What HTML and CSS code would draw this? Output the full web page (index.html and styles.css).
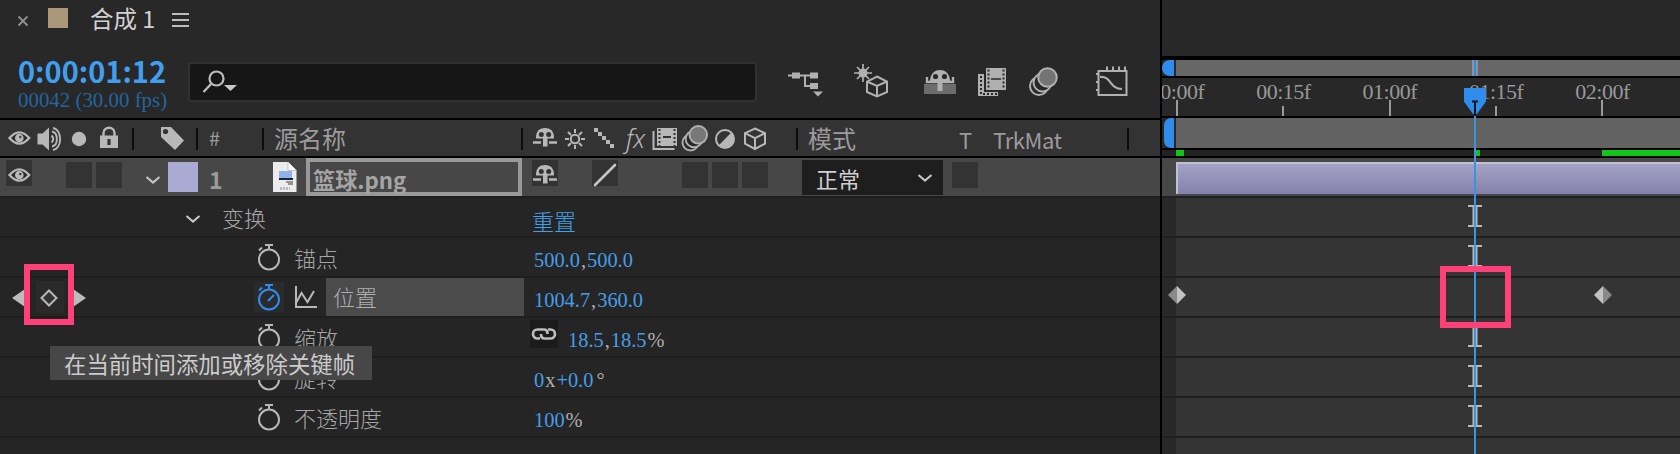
FILE: index.html
```html
<!DOCTYPE html>
<html lang="zh-CN">
<head>
<meta charset="utf-8">
<title>合成 1</title>
<link rel="stylesheet" href="styles.css">
</head>
<body>
<svg class="defs" width="0" height="0">
  <symbol id="eye" viewBox="0 0 30 30"><path d="M5.500 15Q15.300 3.800 25.200 15Q15.300 26.200 5.500 15Z" fill="#2b2b2b" stroke="#b8b8b8" stroke-width="2.400"/><circle cx="15.300" cy="15" r="4.300" fill="#b8b8b8"/><circle cx="16.300" cy="14" r="1.300" fill="#444"/></symbol>
  <symbol id="shy" viewBox="0 0 30 30"><path d="M6 14.500C6 8 10 5 15 5s9 3 9 9.500v1H6z" fill="#b8b8b8"/><circle cx="11.300" cy="11.500" r="2.500" fill="#333"/><circle cx="18.700" cy="11.500" r="2.500" fill="#333"/><path d="M3 19.500h8M19 19.500h8" stroke="#b8b8b8" stroke-width="2.400"/><path d="M13 14h4.500v9.500H13z" fill="#b8b8b8"/></symbol>
  <symbol id="watch" viewBox="0 0 30 30"><g fill="none" stroke="currentColor" stroke-width="2"><circle cx="15" cy="17.500" r="10"/><path d="M15 3.500v4M11 3h8M5 8.500l3-3"/></g></symbol>
  <symbol id="chev" viewBox="0 0 16 10"><path d="M1.500 2l6.500 5.500L14.500 2" fill="none" stroke="#c4c4c4" stroke-width="2.200"/></symbol>
  <symbol id="cube" viewBox="0 0 30 30"><path d="M15 5.500l10 4.700v10.500L15 26 5 20.700V10.200zM5 10.200l10 5 10-5M15 15.200V26" fill="none" stroke="#b8b8b8" stroke-width="2"/></symbol>
  <symbol id="blur" viewBox="0 0 30 30"><g fill="#282828" stroke="#b0b0b0" stroke-width="1.900"><circle cx="10.500" cy="19.500" r="8"/><circle cx="14" cy="16" r="8.300"/><circle cx="18.300" cy="11.800" r="8.800" fill="#777"/></g></symbol>
</svg>

<main class="app">
  <section class="panel">
    <div class="tab">
      <svg class="close" width="12" height="12" viewBox="0 0 12 12"><path d="M1.500 1.500l9 9M10.500 1.500l-9 9" stroke="#909090" stroke-width="1.800"/></svg>
      <span class="comp-swatch"></span>
      <span class="comp-name">合成 1</span>
      <svg class="menu" width="17" height="16" viewBox="0 0 17 16"><path d="M0 2h17M0 8h17M0 14h17" stroke="#bdbdbd" stroke-width="2"/></svg>
    </div>
    <div class="tools">
      <div class="time"><span class="timecode">0:00:01:12</span><span class="frames">00042 (30.00 fps)</span></div>
      <div class="search"><svg width="36" height="26" viewBox="0 0 36 26"><circle cx="14.500" cy="9.500" r="7" fill="none" stroke="#bcbcbc" stroke-width="2.200"/><path d="M9.500 14.500L1.500 23" stroke="#bcbcbc" stroke-width="2.400"/><path d="M22 16h13l-6.500 6z" fill="#c8c8c8"/></svg></div>
      <div class="buttons">
        <svg width="36" height="36" viewBox="0 0 36 36"><path d="M0 12.500h24M17 12.500v10.500h7" fill="none" stroke="#b0b0b0" stroke-width="2"/><path d="M4 9.500h8v6H4zM22 9.500h8v6h-8zM22 20h8v6h-8zM25 28.500h10l-5 5z" fill="#b0b0b0"/></svg>
        <svg width="36" height="36" viewBox="0 0 36 36"><path d="M9 1v18M0 10h18M3 4l12 12M15 4L3 16" stroke="#b0b0b0" stroke-width="1.700"/><circle cx="9" cy="10" r="4.500" fill="#b0b0b0"/><path d="M23 13.500l10 5v10.500l-10 4.500-10-4.500V18.500zM13 18.500l10 4.500 10-4.500M23 23v10" fill="none" stroke="#b0b0b0" stroke-width="2"/></svg>
        <svg width="34" height="36" viewBox="0 0 34 36"><path d="M1 21h32v10H1z" fill="#6b6b6b"/><path d="M7 17C8 10 12 7 17 7s9 3 10 10v2H7z" fill="#b0b0b0"/><path d="M4 14v5h26v-5" fill="none" stroke="#b0b0b0" stroke-width="2.400"/><path d="M14.500 16h5v12h-5z" fill="#b0b0b0"/><circle cx="12.500" cy="13.500" r="2.600" fill="#282828"/><circle cx="21.500" cy="13.500" r="2.600" fill="#282828"/></svg>
        <svg width="32" height="36" viewBox="0 0 32 36"><path d="M10 5h20v22H10z" fill="#b0b0b0"/><path d="M12.500 6.500v20M27.500 6.500v20" stroke="#282828" stroke-width="2" stroke-dasharray="2 2"/><path d="M15 16h10" stroke="#282828" stroke-width="1.500"/><path d="M2 11h6v18h14v4H2z" fill="#b0b0b0"/><path d="M5 13v18h17" fill="none" stroke="#282828" stroke-width="2" stroke-dasharray="2 2"/></svg>
        <svg width="32" height="36" viewBox="0 0 32 36"><g fill="#282828" stroke="#b0b0b0" stroke-width="2"><circle cx="11" cy="23" r="9"/><circle cx="14.500" cy="19.500" r="9"/><circle cx="19.500" cy="14.500" r="9.300" fill="#747474"/></g></svg>
        <svg width="34" height="36" viewBox="0 0 34 36"><path d="M3.500 8h28v24h-28zM12 3.500V8M18 3.500V8M24 3.500V8M30 3.500V8M1 11h3M1 19h3M1 27h3" fill="none" stroke="#b0b0b0" stroke-width="2"/><path d="M5 14C17 13 14 26 27 26" fill="none" stroke="#b0b0b0" stroke-width="2.200"/></svg>
      </div>
    </div>

    <div class="columns">
      <div class="col av">
        <svg class="slot"><use href="#eye"/></svg>
        <svg class="slot" viewBox="0 0 30 30"><path d="M3.500 10.500h5L15 4.500v23l-6.500-6h-5z" fill="#b8b8b8"/><path d="M17.500 12.500q3.500 3.500 0 7M18 8.500c6.500 1.500 6.500 13.500 0 15M19 5c9.500 1.500 9.500 20.500 0 22" fill="none" stroke="#b8b8b8" stroke-width="1.900"/></svg>
        <svg class="slot" viewBox="0 0 30 30"><circle cx="15" cy="16" r="7.200" fill="#b8b8b8"/></svg>
        <svg class="slot" viewBox="0 0 30 30"><path d="M9.500 13v-3c0-7 11-7 11 0v3" fill="none" stroke="#b8b8b8" stroke-width="2.400"/><path d="M6 12.500h18V25H6z" fill="#b8b8b8"/><path d="M15 16v6" stroke="#333" stroke-width="3.200"/></svg>
      </div>
      <div class="col label"><svg class="slot" viewBox="0 0 30 30"><path d="M4 4h10l13 13.500-9 9.500L4 14z" fill="#b8b8b8"/><circle cx="8.500" cy="8.500" r="2.600" fill="#333"/></svg></div>
      <div class="col num">#</div>
      <div class="col source">源名称</div>
      <div class="col switches">
        <svg class="slot"><use href="#shy"/></svg>
        <svg class="slot" viewBox="0 0 30 30"><circle cx="15" cy="16" r="4.200" fill="none" stroke="#b8b8b8" stroke-width="2"/><path d="M15 6v4M15 22v4M5 16h4M21 16h4M8 9l3 3M19 20l3 3M22 9l-3 3M11 20l-3 3" stroke="#b8b8b8" stroke-width="2"/></svg>
        <svg class="slot" viewBox="0 0 30 30"><path d="M4 5h4v4H4zM8 9h4v4H8zM12 13h4v4h-4zM16 17h4v4h-4zM20 21h4v4h-4z" fill="#b8b8b8"/></svg>
        <span class="slot fx">fx</span>
        <svg class="slot" viewBox="0 0 30 30"><path d="M7 5h20v18H7z" fill="#b8b8b8"/><path d="M9.500 6v17M24.500 6v17" stroke="#333" stroke-width="2" stroke-dasharray="2 2"/><path d="M13 14h8" stroke="#333" stroke-width="2"/><path d="M3.500 8v18h21" fill="none" stroke="#b8b8b8" stroke-width="2"/></svg>
        <svg class="slot"><use href="#blur"/></svg>
        <svg class="slot" viewBox="0 0 30 30"><circle cx="15" cy="16" r="9" fill="none" stroke="#b8b8b8" stroke-width="2"/><path d="M21.400 9.600a9 9 0 0 1-12.800 12.800z" fill="#b8b8b8"/></svg>
        <svg class="slot"><use href="#cube"/></svg>
      </div>
      <div class="col mode"><span class="m">模式</span><span class="t">T</span><span class="trk">TrkMat</span></div>
    </div>

    <div class="layer">
      <div class="av">
        <span class="slot"><i class="box"><svg width="30" height="30"><use href="#eye"/></svg></i></span>
        <span class="slot"></span>
        <span class="slot"><i class="box"></i></span>
        <span class="slot"><i class="box"></i></span>
      </div>
      <svg class="twirl" width="16" height="10"><use href="#chev"/></svg>
      <span class="layer-swatch"></span>
      <span class="layer-num">1</span>
      <svg class="file" width="26" height="32" viewBox="0 0 26 32"><path d="M1 1h15l8.500 8.500V31H1z" fill="#ececec"/><path d="M16 1v8.500h8.500" fill="#fff" stroke="#bbb" stroke-width=".8"/><path d="M7 10h13v7H7z" fill="#8cb4ea"/><path d="M7 17h14v2H7z" fill="#172537"/><path d="M14 21h7M16 23h5" stroke="#777" stroke-width="1.500"/><path d="M8 27.500h10" stroke="#bbb" stroke-width="3" stroke-dasharray="2 1"/></svg>
      <span class="layer-name">篮球.png</span>
      <div class="layer-switches">
        <span class="slot"><i class="box"><svg width="30" height="30"><use href="#shy"/></svg></i></span>
        <span class="slot"></span>
        <span class="slot"><i class="box"><svg width="30" height="30" viewBox="0 0 30 30"><path d="M5 25L25 5" stroke="#c4c4c4" stroke-width="2.600" stroke-linecap="round"/></svg></i></span>
        <span class="slot"></span><span class="slot"></span>
        <span class="slot"><i class="box"></i></span>
        <span class="slot"><i class="box"></i></span>
        <span class="slot"><i class="box"></i></span>
      </div>
      <div class="blend"><span>正常</span><svg width="16" height="10"><use href="#chev"/></svg></div>
      <span class="slot"><i class="box"></i></span>
    </div>

    <div class="prop group">
      <svg width="16" height="10"><use href="#chev"/></svg><span class="pname">变换</span><span class="value reset">重置</span>
    </div>
    <div class="prop">
      <span></span><svg class="slot watch"><use href="#watch"/></svg><span class="pname">锚点</span><span class="value">500.0<b>,</b>500.0</span>
    </div>
    <div class="prop">
      <svg class="keynav" width="80" height="38" viewBox="0 0 80 38"><path d="M2 20l13-9v18zM76 20l-13-9v18z" fill="#bcbcbc"/><path d="M26 3h28v32H26z" fill="#2a2a2a"/><path d="M39 12.500l7.500 7.500-7.500 7.500-7.500-7.500z" fill="#333" stroke="#b8b8b8" stroke-width="2"/></svg>
      <svg class="slot watch on" viewBox="0 0 30 30"><use href="#watch"/><path d="M14 19l6-6" stroke="currentColor" stroke-width="2.200"/></svg>
      <div class="active"><svg width="24" height="24" viewBox="0 0 24 24"><path d="M2 1v21h21M2 18L7.500 8l6 9L20 6" fill="none" stroke="#b8b8b8" stroke-width="2"/></svg><span>位置</span></div>
      <span class="value">1004.7<b>,</b>360.0</span>
    </div>
    <div class="prop">
      <span></span><svg class="slot watch"><use href="#watch"/></svg><span class="pname">缩放</span>
      <span class="value linked"><svg width="28" height="28" viewBox="0 0 28 28"><path d="M10 18.500H7.500a4.500 4.500 0 0 1 0-9H14q3.500 0 3.500 4.500M18 9.500h2.500a4.500 4.500 0 0 1 0 9H14.500q-3.500 0-3.500-4.500" fill="none" stroke="#bcbcbc" stroke-width="2.700"/></svg><span>18.5<b>,</b>18.5<b>%</b></span></span>
    </div>
    <div class="prop">
      <span></span><svg class="slot watch"><use href="#watch"/></svg><span class="pname">旋转</span><span class="value">0<b class="x">x</b>+0.0<b class="deg">°</b></span>
    </div>
    <div class="prop">
      <span></span><svg class="slot watch"><use href="#watch"/></svg><span class="pname">不透明度</span><span class="value">100<b class="pct">%</b></span>
    </div>
    <div class="prop"></div>
    <i class="mark mark-key"></i>
    <div class="tooltip">在当前时间添加或移除关键帧</div>
  </section>

  <section class="timeline">
    <div class="spacer"></div>
    <div class="navigator"><i class="handle"></i><i class="range"></i></div>
    <div class="ruler"><span>00:00f</span><span class="half">00:15f</span><span>01:00f</span><span class="half">01:15f</span><span>02:00f</span></div>
    <div class="workarea"><i class="handle"></i><i class="range"></i></div>
    <div class="cache"><i class="c1"></i><i class="c2"></i><i class="c3"></i></div>
    <div class="track clip"><i></i></div>
    <div class="track"><svg class="beam" viewBox="0 0 14 24"><use href="#ibeam"/></svg></div>
    <div class="track"><svg class="beam" viewBox="0 0 14 24"><use href="#ibeam"/></svg></div>
    <div class="track">
      <svg class="key k1" viewBox="0 0 18 18"><path d="M9 0v18L0 9z" fill="#898989"/><path d="M9 0v18l9-9z" fill="#c2c2c2"/></svg>
      <svg class="key k2" viewBox="0 0 18 18"><path d="M9 0v18L0 9z" fill="#c2c2c2"/><path d="M9 0v18l9-9z" fill="#898989"/></svg>
    </div>
    <div class="track"><svg class="beam" viewBox="0 0 14 24"><use href="#ibeam"/></svg></div>
    <div class="track"><svg class="beam" viewBox="0 0 14 24"><use href="#ibeam"/></svg></div>
    <div class="track"><svg class="beam" viewBox="0 0 14 24"><use href="#ibeam"/></svg></div>
    <div class="track"></div>
    <svg class="defs" width="0" height="0"><symbol id="ibeam" viewBox="0 0 14 24"><path d="M0 1h14v2H9.500v18H14v2H0v-2h4.500V3H0z" fill="#b8b8b8"/></symbol></svg>
    <i class="navmark"></i>
    <i class="mark mark-time"></i>
    <i class="playline"></i>
    <svg class="playhead" width="22" height="28" viewBox="0 0 22 28"><path d="M0 0h22v13.500L13 26h-4L0 13.500z" fill="#2f8cec"/><path d="M8 13.500h6M11 13.500V28" stroke="#151515" stroke-width="2"/></svg>
    <i class="mark-edge top"></i><i class="mark-edge bottom"></i>
  </section>
</main>
</body>
</html>
```

FILE: styles.css
```css
* { box-sizing: border-box; }
body { margin: 0; background: #282828; font: 22px/1 "Noto Sans CJK SC", sans-serif; color: #9b9b9b; }
.defs { position: absolute; }
svg { display: block; flex: none; }
i { display: block; font-style: normal; }
.app { display: flex; width: 1680px; height: 454px; overflow: hidden; }
.panel { position: relative; width: 1160px; flex: none; background: #282828; }
.slot { width: 30px; height: 30px; flex: none; display: block; }

.tab { display: flex; align-items: center; height: 40px; padding-left: 17px; }
.close { margin-top: 2px; }
.comp-swatch { width: 20px; height: 20px; margin: -4px 0 0 19px; background: #aa9878; }
.comp-name { margin: -2px 0 0 22px; font-size: 23.500px; color: #d2d2d2; word-spacing: 0; }
.menu { margin-left: 17px; }

.tools { display: flex; height: 78px; }
.time { width: 189px; padding: 15px 0 0 18px; white-space: nowrap; }
.timecode { display: block; font-size: 29px; font-weight: 700; line-height: 30px; color: #419ff0; }
.frames { display: block; margin-top: 4px; font: 20.900px/22px "Liberation Serif", serif; color: #25659f; }
.search { width: 569px; height: 40px; margin: 22px 0 0 -1px; padding: 5px 0 0 12px; background: #161616; border: 2px solid #303030; border-radius: 4px; }
.buttons { display: flex; padding: 23px 0 0 31px; }
.buttons svg:nth-child(2) { margin-left: 30px; }
.buttons svg:nth-child(3) { margin-left: 33px; }
.buttons svg:nth-child(4) { margin-left: 19px; }
.buttons svg:nth-child(5) { margin-left: 20px; }
.buttons svg:nth-child(6) { margin-left: 35px; }

.columns { display: flex; align-items: center; height: 40px; background: #333; border-top: 2px solid #000; border-bottom: 2px solid #000; font-size: 24px; }
.col { display: flex; align-items: center; height: 36px; position: relative; flex: none; }
.col::after { content: ""; width: 2px; height: 22px; margin: 2px 0 0 auto; background: #0c0c0c; }
.columns .av { width: 134px; padding-left: 4px; }
.label { width: 64px; padding-left: 23px; }
.num { width: 66px; padding: 0 0 0 11px; font-size: 20px; }
.source { width: 259px; padding-left: 10px; }
.switches { width: 275px; padding-left: 7px; }
.fx { font: italic 300 25px/30px "Noto Sans", sans-serif; color: #b8b8b8; padding-left: 6px; }
.mode { width: 331px; padding-left: 10px; }
.mode span { font-size: 22px; padding-top: 1px; }
.mode .m { width: 151px; font-size: 24px; padding: 0; }
.mode .t { width: 34px; }
.mode .trk { letter-spacing: -.4px; }

.layer { display: flex; height: 38px; background: #474747; }
.layer .slot { padding: 2px; margin-top: 2px; }
.box { width: 26px; height: 26px; background: #333; }
.box svg { margin: -2px; position: relative; }
.layer .av { display: flex; padding-left: 4px; width: 145px; }
.twirl { margin-top: 17px; }
.layer-swatch { width: 30px; height: 30px; margin: 4px 0 0 7px; background: #abaad2; }
.layer-num { width: 74px; padding: 10px 0 0 11px; font-size: 23px; font-weight: 700; }
.file { margin-top: 3px; }
.layer-name { width: 216px; margin-left: 8px; padding: 2px 0 0 3px; border: 4px solid #999; font-weight: 700; font-size: 22.200px; line-height: 30px; color: #a5a5a5; }
.layer-switches { display: flex; width: 280px; padding-left: 8px; }
.blend { display: flex; justify-content: space-between; align-items: center; width: 141px; height: 35px; margin-top: 2px; padding: 0 10px 0 14px; background: #1e1e1e; color: #d0d0d0; }
.blend + .slot { margin-left: 7px; }

.prop { display: grid; grid-template-columns: 254px 30px 248px 1fr; align-items: center; height: 40px; border-top: 2px solid #1e1e1e; background: #252525; }
.prop.group { grid-template-columns: 37px 310px 1fr; padding-left: 185px; }
.prop.group > svg { margin-top: 4px; }
.pname { padding-left: 10px; font-weight: 300; color: #a6a6a6; }
.group .pname { padding-left: 0; }
.value { font: 20.400px/24px "Liberation Serif", serif; color: #459ee8; padding: 6px 0 0 2px; }
.value b { font-weight: 400; color: #b0b0b0; padding: 0 1px; }
.value .deg { margin-left: 2px; }
.value.reset { font: 300 22px/24px "Noto Sans CJK SC", sans-serif; padding: 5px 0 0; }
.linked { display: flex; padding: 0; }
.linked svg { background: #1b1b1b; margin: -2px 10px 0 -2px; }
.linked > span { padding-top: 6px; }
.watch { color: #b8b8b8; }
.watch.on { color: #2f8cec; background: #2b2b2b; }
.keynav { margin-left: 10px; }
.active { display: flex; align-items: center; height: 38px; }
.active svg { margin: 0 8px 0 10px; }
.active span { width: 198px; height: 38px; padding: 7px 0 0 7px; background: #4b4b4b; font-weight: 300; color: #b0b0b0; }

.mark { position: absolute; border: 6px solid #ff4079; }
.mark-key { left: 24px; top: 264px; width: 50px; height: 61px; }
.tooltip { position: absolute; left: 50px; top: 346px; width: 322px; height: 34px; padding: 0 0 0 14px; background: #474747; color: #ccc; font-size: 22.400px; line-height: 35px; white-space: nowrap; }

.timeline { position: relative; width: 520px; border-left: 2px solid #000; overflow: hidden; background: #282828; }
.spacer { height: 56px; width: 520px; margin-left: -2px; position: relative; background: #282828; }
.navigator { display: flex; height: 22px; border: solid #000; border-width: 4px 0 2px; }
.navigator, .workarea { background: #282828; }
.handle { width: 12px; background: #2f8cec; border-radius: 10px 0 0 10px; }
.range { flex: 1; margin-left: 2px; background: #676767; }
.ruler { display: flex; height: 38px; margin-left: -38.200px; font: 22px/28px "Liberation Serif", serif; color: #999; }
.ruler span { position: relative; flex: none; width: 106.400px; text-align: center; letter-spacing: -.5px; }
.ruler span::after { content: ""; position: absolute; left: 52px; bottom: 0; width: 2px; height: 16px; background: #9b9b9b; }
.ruler .half::after { height: 10px; }
.workarea { display: flex; height: 34px; border: solid #000; border-width: 2px 0; }
.workarea .handle { width: 10px; margin-left: 2px; border-radius: 7px 0 0 7px; }
.workarea .range { background: #626262; }
.cache { display: flex; height: 8px; padding-left: 14px; background: #222; border-bottom: 2px solid #000; }
.cache i { background: #13c41b; }
.c1 { width: 8px; }
.c2 { width: 4px; margin-left: 292px; }
.c3 { flex: 1; margin-left: 122px; }
.track { position: relative; height: 40px; border-top: 2px solid #202020; background: linear-gradient(90deg, #282828 14px, #343434 14px); }
.clip { height: 38px; border: 0; padding: 4px 0 2px 14px; background: #474747; }
.clip i { height: 32px; background: linear-gradient(#a5a2c6, #8482ac); border: solid #c1c0d5; border-width: 2px 0 0 2px; }
.beam { position: absolute; left: 306px; top: 6px; width: 14px; height: 24px; }
.key { position: absolute; top: 8px; width: 18px; height: 18px; }
.k1 { left: 6px; }
.k2 { left: 432px; }
.navmark { position: absolute; left: 310px; top: 60px; width: 6px; height: 16px; background: #2f8cec; border: solid #8e9298; border-width: 0 2px; }
.playline { position: absolute; left: 312px; top: 116px; width: 2px; bottom: 0; background: #3b93e6; }
.playhead { position: absolute; left: 302px; top: 88px; }
.mark-time { left: 278px; top: 266px; width: 71px; height: 62px; }
.mark-edge { position: absolute; left: 310px; width: 6px; height: 6px; background: #ff4079; }
.mark-edge.top { top: 266px; }
.mark-edge.bottom { top: 322px; }
```
